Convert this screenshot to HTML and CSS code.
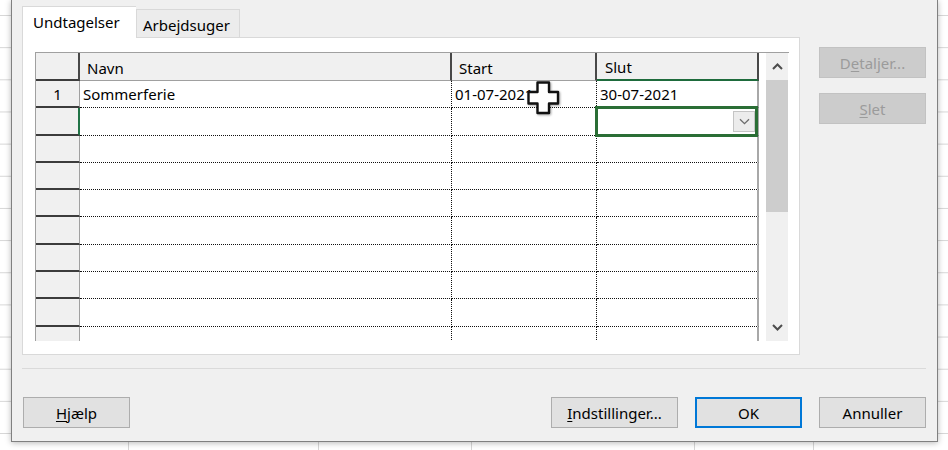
FILE: index.html
```html
<!DOCTYPE html>
<html lang="da">
<head>
<meta charset="utf-8">
<title>Undtagelser</title>
<link rel="stylesheet" href="styles.css">
</head>
<body>
<div class="desk">
  <div class="dialog">
    <div class="main">
      <div class="tabarea">
        <div class="tabs">
          <div class="tab active">Undtagelser</div>
          <div class="tab">Arbejdsuger</div>
        </div>
        <div class="panel">
          <div class="gridctl">
            <div class="table">
              <div class="c rh hd"></div>
              <div class="c hd">Navn</div>
              <div class="c hd">Start</div>
              <div class="c hd last selcol">Slut</div>

              <div class="c rh">1</div>
              <div class="c">Sommerferie</div>
              <div class="c">01-07-2021</div>
              <div class="c last">30-07-2021</div>

              <div class="c rh selrow"></div>
              <div class="c"></div>
              <div class="c"></div>
              <div class="c last sel"><span class="dd"><svg width="11" height="7" viewBox="0 0 11 7"><path d="M1 1.2 L5.5 5.6 L10 1.2" fill="none" stroke="#6b6b6b" stroke-width="1.3"/></svg></span></div>

              <div class="c rh"></div><div class="c"></div><div class="c"></div><div class="c last"></div>
              <div class="c rh"></div><div class="c"></div><div class="c"></div><div class="c last"></div>
              <div class="c rh"></div><div class="c"></div><div class="c"></div><div class="c last"></div>
              <div class="c rh"></div><div class="c"></div><div class="c"></div><div class="c last"></div>
              <div class="c rh"></div><div class="c"></div><div class="c"></div><div class="c last"></div>
              <div class="c rh"></div><div class="c"></div><div class="c"></div><div class="c last"></div>
              <div class="c rh"></div><div class="c"></div><div class="c"></div><div class="c last"></div>
              <div class="c rh"></div><div class="c"></div><div class="c"></div><div class="c last"></div>

              <svg class="cursor" width="33" height="34" viewBox="0 0 33 34"><polygon points="10.5,1.5 22,1.5 22,11 31,11 31,22.5 22,22.5 22,32 10.5,32 10.5,22.5 1.5,22.5 1.5,11 10.5,11" fill="#fff" stroke="#111" stroke-width="2.4" stroke-linejoin="round"/></svg>
            </div>
            <div class="vscroll">
              <div class="sbbtn"><svg width="11" height="7" viewBox="0 0 11 7"><path d="M1 6 L5.5 1.5 L10 6" fill="none" stroke="#4d4d4d" stroke-width="2"/></svg></div>
              <div class="thumb"></div>
              <div class="track"></div>
              <div class="sbbtn"><svg width="11" height="7" viewBox="0 0 11 7"><path d="M1 1 L5.5 5.5 L10 1" fill="none" stroke="#4d4d4d" stroke-width="2"/></svg></div>
            </div>
          </div>
        </div>
      </div>
      <div class="side">
        <div class="btn disabled">D<span class="ak">e</span>taljer...</div>
        <div class="btn disabled"><span class="ak">S</span>let</div>
      </div>
    </div>
    <div class="sep"></div>
    <div class="footer">
      <div class="btn help"><span class="ak">H</span>jælp</div>
      <div class="right">
        <div class="btn wide"><span class="ak">I</span>ndstillinger...</div>
        <div class="btn default">OK</div>
        <div class="btn">Annuller</div>
      </div>
    </div>
  </div>
  <div class="sheetrow">
    <div class="sc w1"></div>
    <div class="sc w2"></div>
    <div class="sc w3"></div>
    <div class="sc w4"></div>
    <div class="sc w5"></div>
  </div>
</div>
</body>
</html>
```

FILE: styles.css
```css
* { box-sizing: border-box; }
html, body { margin: 0; padding: 0; }
body {
  width: 948px;
  height: 450px;
  overflow: hidden;
  background-color: #fff;
  background-image: linear-gradient(#d6d6d6 0 1px, transparent 1px);
  background-size: 100% 32.17px;
  background-position: 0 15px;
  font-family: "Noto Sans", "Open Sans", sans-serif;
  font-size: 15px;
  color: #000;
}
.desk { display: flex; flex-direction: column; }
.dialog {
  position: relative;
  z-index: 1;
  margin-left: 11px;
  width: 927px;
  background: #f0f0f0;
  border: 1px solid #808080;
  border-top: none;
  padding: 6px 11px 13px 10px;
  box-shadow: 0 1px 6px rgba(0,0,0,0.28);
}
.main { display: flex; }
.tabarea { width: 778px; }
.tabs { display: flex; align-items: flex-end; height: 31px; }
.tab {
  height: 28px;
  width: 104px;
  border: 1px solid #d9d9d9;
  border-bottom: none;
  background: #ececec;
  padding-left: 6px;
  line-height: 30px;
  white-space: nowrap;
}
.tab.active {
  position: relative;
  z-index: 2;
  height: 32px;
  width: 114px;
  margin-bottom: -1px;
  background: #fff;
  padding-left: 10px;
  line-height: 31px;
  border-right: none;
}
.panel {
  height: 318px;
  border: 1px solid #d9d9d9;
  background: #fff;
  padding: 14px 10px 0 12px;
}
.gridctl {
  display: flex;
  border-top: 1px solid #a0a0a0;
  border-left: 1px solid #a0a0a0;
  height: 289px;
}
.table {
  position: relative;
  display: grid;
  grid-template-columns: 44px 372px 145px 162px;
  grid-template-rows: 28px repeat(10, 27.3px);
  width: 723px;
  height: 288px;
  overflow: hidden;
}
.c {
  display: flex;
  align-items: center;
  padding-left: 3px;
  border-right: 1px dotted #111;
  border-bottom: 1px dotted #111;
  white-space: nowrap;
  overflow: hidden;
}
.c.last { border-right: 2px solid #a8a8a8; }
.rh {
  background: #f0f0f0;
  justify-content: center;
  padding-left: 0;
  border-right: 1px solid #a0a0a0;
  border-bottom: 2px solid #3c3c3c;
}
.rh.selrow { border-right: 2px solid #217346; }
.hd {
  background: #f0f0f0;
  align-items: flex-end;
  padding: 0 0 2px 7px;
  border-right: 2px solid #484848;
  border-bottom: 1px solid #a0a0a0;
}
.hd.last { border-right: 2px solid #484848; padding-left: 8px; }
.rh.hd { border-bottom: 2px solid #3c3c3c; }
.hd.selcol { border-bottom: 2px solid #1e6b3c; }
.c.sel {
  position: relative;
  overflow: visible;
  justify-content: flex-end;
  padding-right: 2px;
}
.sel::after {
  content: "";
  position: absolute;
  left: -2px;
  top: -2px;
  right: -1px;
  bottom: -2px;
  border: 3px solid #2a6e35;
  z-index: 1;
}
.dd {
  position: relative;
  z-index: 2;
  display: flex;
  align-items: center;
  justify-content: center;
  width: 22px;
  height: 21px;
  border: 1px solid #c4c4c4;
  background: #ececec;
}
.cursor {
  position: absolute;
  left: 491px;
  top: 28px;
  z-index: 3;
  filter: drop-shadow(1px 1px 1px rgba(0,0,0,0.35));
}
.vscroll {
  width: 22px;
  margin-left: 7px;
  height: 288px;
  display: flex;
  flex-direction: column;
  background: #f0f0f0;
}
.sbbtn {
  height: 27px;
  display: flex;
  align-items: center;
  justify-content: center;
}
.thumb { height: 132px; background: #cdcdcd; }
.track { flex: 1; }
.side {
  margin-left: 19px;
  padding-top: 41px;
  display: flex;
  flex-direction: column;
  gap: 15px;
}
.btn {
  width: 107px;
  height: 31px;
  border: 1px solid #adadad;
  background: #e1e1e1;
  display: flex;
  align-items: center;
  justify-content: center;
  white-space: nowrap;
  color: #000;
}
.btn.disabled { background: #cccccc; border-color: #c2c2c2; color: #9b9b9b; }
.btn.default { border: 2px solid #0078d7; }
.btn.wide { width: 127px; }
.btn.help { margin-left: 1px; }
.ak { text-decoration: underline; text-underline-offset: 2px; }
.sep { margin-top: 13px; height: 1px; background: #dadada; }
.footer { margin-top: 28px; display: flex; justify-content: space-between; }
.right { display: flex; gap: 17px; }
.sheetrow { display: flex; height: 9px; }
.sc { border-right: 1px solid #d6d6d6; height: 100%; }
.w1 { width: 129px; }
.w2 { width: 190px; }
.w3 { width: 153px; }
.w4 { width: 223px; }
.w5 { width: 119px; }
```
